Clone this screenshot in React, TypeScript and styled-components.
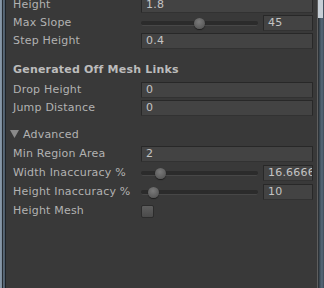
import React from "react";
import styled, { createGlobalStyle } from "styled-components";

const GlobalStyle = createGlobalStyle`
  html, body {
    margin: 0;
    padding: 0;
    background: #393939;
  }
  #root {
    height: 288px;
    overflow: hidden;
  }
`;

const Window = styled.div`
  display: flex;
  height: 288px;
  width: 324px;
  overflow: hidden;
  font-family: "DejaVu Sans", Verdana, sans-serif;
  font-size: 11px;
  letter-spacing: 0.2px;
  color: #b2b2b2;
`;

const LeftFrame = styled.div`
  width: 6px;
  flex: none;
  background:
    linear-gradient(to right, #8c9cac 0, #7a8a9a 2px, #262c32 2px, #262c32 3px,
      #5d6d7c 3px, #4c5a68 5px, #1e2226 5px, #1e2226 6px);
`;

const RightFrame = styled.div`
  width: 7px;
  flex: none;
  position: relative;
  background: linear-gradient(to right, #5e5e5e 0, #5e5e5e 1px, #26292c 1px, #40505c 3px, #56687a 5px, #3c4854 7px);

  &::before {
    content: "";
    position: absolute;
    left: 1px;
    top: 0;
    width: 5px;
    height: 18px;
    background: #c6ced6;
  }
`;

const Panel = styled.div`
  flex: 1;
  background: #393939;
  padding: 0 4px 0 7px;
  display: flex;
  flex-direction: column;
`;

const Rows = styled.div<{ $top?: number; $gap?: number }>`
  display: flex;
  flex-direction: column;
  gap: ${(p) => p.$gap ?? 0}px;
  margin-top: ${(p) => p.$top ?? 0}px;
`;

const Row = styled.div`
  display: grid;
  grid-template-columns: 128px 1fr;
  align-items: center;
  height: 18px;
`;

const Label = styled.div`
  white-space: nowrap;
  line-height: 18px;
`;

const Header = styled.div<{ $top: number }>`
  font-weight: bold;
  color: #bcbcbc;
  height: 18px;
  line-height: 18px;
  margin-top: ${(p) => p.$top}px;
`;

const Foldout = styled.div<{ $top: number }>`
  display: flex;
  align-items: center;
  gap: 4px;
  height: 18px;
  margin-top: ${(p) => p.$top}px;
  margin-left: -3px;
`;

const Field = styled.div<{ $width?: number }>`
  box-sizing: border-box;
  height: 16px;
  width: ${(p) => (p.$width ? `${p.$width}px` : "100%")};
  background: #434343;
  border: 1px solid #282828;
  border-bottom-color: #323232;
  border-radius: 1px;
  padding-left: 4px;
  line-height: 14px;
  color: #c4c4c4;
  overflow: hidden;
  white-space: nowrap;
`;

const SliderWrap = styled.div`
  display: flex;
  align-items: center;
  gap: 5px;
`;

const Track = styled.div`
  position: relative;
  width: 117px;
  height: 4px;
  background: #2b2b2b;
  border-bottom: 1px solid #474747;
  border-radius: 2px;
`;

const Thumb = styled.div`
  position: absolute;
  top: 50%;
  width: 11px;
  height: 11px;
  margin: -5px 0 0 -5px;
  border-radius: 50%;
  background: radial-gradient(circle at 45% 35%, #7a7a7a, #5a5a5a 70%, #4a4a4a);
  box-shadow: 0 1px 1px rgba(0, 0, 0, 0.5);
`;

const Check = styled.div`
  width: 13px;
  height: 13px;
  box-sizing: border-box;
  border: 1px solid #2c2c2c;
  border-radius: 2px;
  background: linear-gradient(#5e5e5e, #4a4a4a);
`;

const Slider = ({ pos, value }: { pos: number; value: string }) => (
  <SliderWrap>
    <Track>
      <Thumb style={{ left: pos }} />
    </Track>
    <Field $width={50}>{value}</Field>
  </SliderWrap>
);

const Triangle = () => (
  <svg width="9" height="8" viewBox="0 0 9 8">
    <polygon points="0,0 9,0 4.5,8" fill="#8a8a8a" />
  </svg>
);

export default function App() {
  return (
    <>
      <GlobalStyle />
      <Window>
        <LeftFrame />
        <Panel>
          <Rows $top={-4}>
            <Row>
              <Label>Height</Label>
              <Field>1.8</Field>
            </Row>
            <Row>
              <Label>Max Slope</Label>
              <Slider pos={58} value="45" />
            </Row>
            <Row>
              <Label>Step Height</Label>
              <Field>0.4</Field>
            </Row>
          </Rows>
          <Header $top={11}>Generated Off Mesh Links</Header>
          <Rows $top={2}>
            <Row>
              <Label>Drop Height</Label>
              <Field>0</Field>
            </Row>
            <Row>
              <Label>Jump Distance</Label>
              <Field>0</Field>
            </Row>
          </Rows>
          <Foldout $top={8}>
            <Triangle />
            <span>Advanced</span>
          </Foldout>
          <Rows $top={2} $gap={1}>
            <Row>
              <Label>Min Region Area</Label>
              <Field>2</Field>
            </Row>
            <Row>
              <Label>Width Inaccuracy %</Label>
              <Slider pos={19} value="16.6666" />
            </Row>
            <Row>
              <Label>Height Inaccuracy %</Label>
              <Slider pos={12} value="10" />
            </Row>
            <Row>
              <Label>Height Mesh</Label>
              <Check />
            </Row>
          </Rows>
        </Panel>
        <RightFrame />
      </Window>
    </>
  );
}
